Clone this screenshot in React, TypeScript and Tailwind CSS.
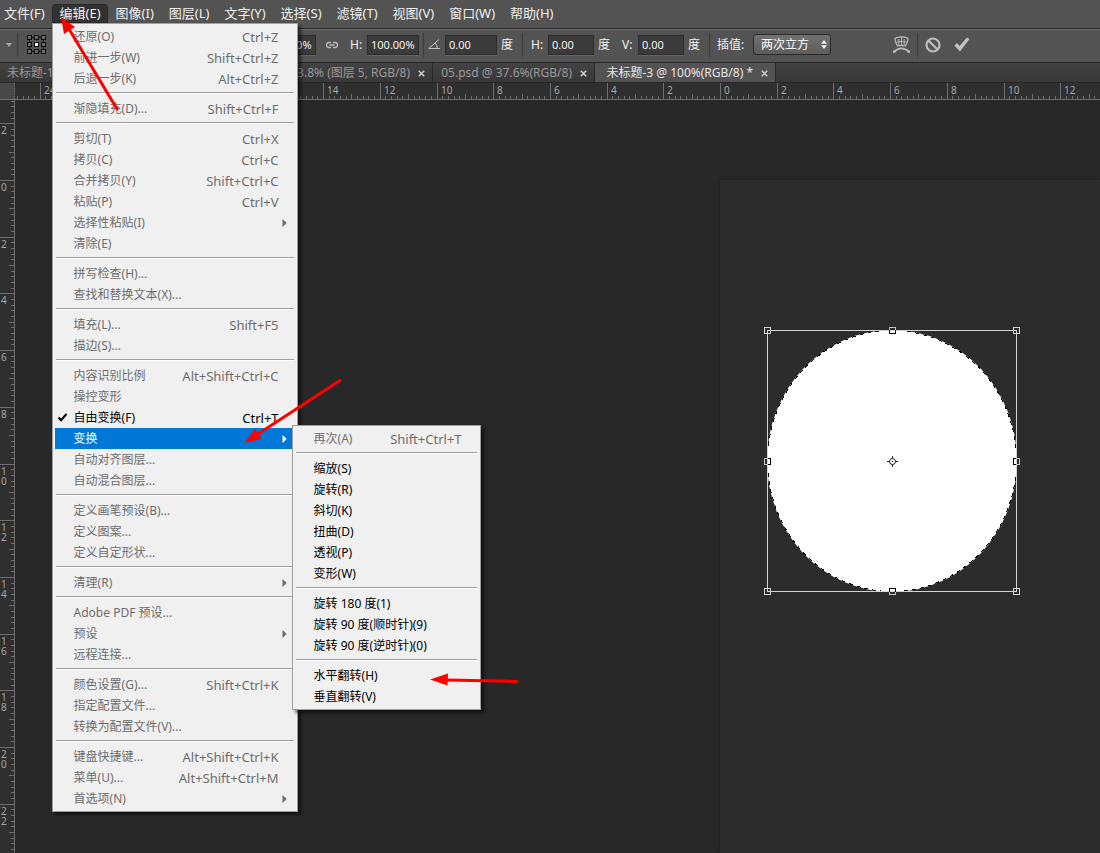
import React, { useEffect, useState } from "react";

const FONT = "font-['Noto_Sans','Noto_Sans_CJK_SC',sans-serif]";

type Entry =
  | "-"
  | {
      label: string;
      keys?: string;
      on?: boolean;
      checked?: boolean;
      more?: boolean;
      children?: Entry[];
    };

const TRANSFORM_MENU: Entry[] = [
  { label: "再次(A)", keys: "Shift+Ctrl+T" },
  "-",
  { label: "缩放(S)", on: true },
  { label: "旋转(R)", on: true },
  { label: "斜切(K)", on: true },
  { label: "扭曲(D)", on: true },
  { label: "透视(P)", on: true },
  { label: "变形(W)", on: true },
  "-",
  { label: "旋转 180 度(1)", on: true },
  { label: "旋转 90 度(顺时针)(9)", on: true },
  { label: "旋转 90 度(逆时针)(0)", on: true },
  "-",
  { label: "水平翻转(H)", on: true },
  { label: "垂直翻转(V)", on: true },
];

const EDIT_MENU: Entry[] = [
  { label: "还原(O)", keys: "Ctrl+Z" },
  { label: "前进一步(W)", keys: "Shift+Ctrl+Z" },
  { label: "后退一步(K)", keys: "Alt+Ctrl+Z" },
  "-",
  { label: "渐隐填充(D)...", keys: "Shift+Ctrl+F" },
  "-",
  { label: "剪切(T)", keys: "Ctrl+X" },
  { label: "拷贝(C)", keys: "Ctrl+C" },
  { label: "合并拷贝(Y)", keys: "Shift+Ctrl+C" },
  { label: "粘贴(P)", keys: "Ctrl+V" },
  { label: "选择性粘贴(I)", more: true },
  { label: "清除(E)" },
  "-",
  { label: "拼写检查(H)..." },
  { label: "查找和替换文本(X)..." },
  "-",
  { label: "填充(L)...", keys: "Shift+F5" },
  { label: "描边(S)..." },
  "-",
  { label: "内容识别比例", keys: "Alt+Shift+Ctrl+C" },
  { label: "操控变形" },
  { label: "自由变换(F)", keys: "Ctrl+T", on: true, checked: true },
  { label: "变换", on: true, more: true, children: TRANSFORM_MENU },
  { label: "自动对齐图层..." },
  { label: "自动混合图层..." },
  "-",
  { label: "定义画笔预设(B)..." },
  { label: "定义图案..." },
  { label: "定义自定形状..." },
  "-",
  { label: "清理(R)", more: true },
  "-",
  { label: "Adobe PDF 预设..." },
  { label: "预设", more: true },
  { label: "远程连接..." },
  "-",
  { label: "颜色设置(G)...", keys: "Shift+Ctrl+K" },
  { label: "指定配置文件..." },
  { label: "转换为配置文件(V)..." },
  "-",
  { label: "键盘快捷键...", keys: "Alt+Shift+Ctrl+K" },
  { label: "菜单(U)...", keys: "Alt+Shift+Ctrl+M" },
  { label: "首选项(N)", more: true },
];

function Menu({ entries, label }: { entries: Entry[]; label: string }) {
  return (
    <ul
      role="menu"
      aria-label={label}
      className="border border-[#a0a0a0] bg-[#f0f0f0] p-0.5 text-xs text-[#6d6d6d] shadow-[3px_3px_3px_rgba(0,0,0,0.55)]"
    >
      {entries.map((entry, i) => {
        if (entry === "-") {
          return (
            <li key={i} role="separator" className="h-[9px] px-px pt-[3px]">
              <div className="h-0.5 border-t border-[#a0a0a0] bg-white" />
            </li>
          );
        }
        const open = Boolean(entry.children);
        const tone = open ? "bg-[#0078d7] text-white" : entry.on ? "text-black" : "";
        return (
          <li key={i} role="none" className="relative">
            <button
              type="button"
              role="menuitem"
              disabled={!entry.on}
              className={`flex h-[21px] w-full items-center whitespace-nowrap text-left ${tone}`}
            >
              <span className="w-[19px] pl-[3px]">
                {entry.checked && (
                  <svg width="9" height="9" viewBox="0 0 9 9" fill="none" stroke="black" strokeWidth="2">
                    <path d="M0.5 4.5 L3 7.2 L8.5 1" />
                  </svg>
                )}
              </span>
              <span className="flex-1">{entry.label}</span>
              {entry.keys && <span className="pr-4 text-[13px] leading-4">{entry.keys}</span>}
              {entry.more && (
                <svg width="5" height="8" viewBox="0 0 5 8" fill="currentColor" className="mr-2">
                  <path d="M0.5 0 L4.7 4 L0.5 8 Z" />
                </svg>
              )}
            </button>
            {entry.children && (
              <div className="absolute -top-[3px] left-[237px] z-10 w-[189px]">
                <Menu entries={entry.children} label={entry.label} />
              </div>
            )}
          </li>
        );
      })}
    </ul>
  );
}

const MENUS = ["文件(F)", "编辑(E)", "图像(I)", "图层(L)", "文字(Y)", "选择(S)", "滤镜(T)", "视图(V)", "窗口(W)", "帮助(H)"];

function MenuBar() {
  return (
    <nav className="-ml-1 flex h-7 items-start pt-1 text-[13px] leading-[19px] text-[#f0f0f0]">
      {MENUS.map((name) =>
        name === "编辑(E)" ? (
          <div key={name} className="relative z-20">
            <button type="button" className="block h-[19px] rounded-t-sm bg-[#323232] pl-2 pr-[7px] ring-1 ring-inset ring-[#2a2a2a]">
              {name}
            </button>
            <div className="absolute left-0 top-full w-[246px]">
              <Menu entries={EDIT_MENU} label="编辑" />
            </div>
          </div>
        ) : (
          <button key={name} type="button" className="block h-[19px] pl-2 pr-[7px]">
            {name}
          </button>
        )
      )}
    </nav>
  );
}

function Field({ label, value, width }: { label: string; value: string; width: string }) {
  return (
    <input
      aria-label={label}
      defaultValue={value}
      className={`h-5 border border-[#2d2d2d] bg-[#3a3a3a] px-[3px] text-[11px] text-[#f2f2f2] shadow-[0_1px_0_#646464] outline-none ${width}`}
    />
  );
}

function Divider() {
  return <span className="h-6 w-px bg-[#3a3a3a]" />;
}

function ReferencePoint() {
  const cells = [0, 1, 2].flatMap((r) => [0, 1, 2].map((c) => [c, r]));
  return (
    <svg width="19" height="19" viewBox="0 0 19 19" shapeRendering="crispEdges">
      <rect x="2" y="2" width="15" height="15" fill="#0a0a0a" />
      <rect x="3" y="3" width="13" height="13" fill="#535353" />
      {cells.map(([c, r]) => (
        <g key={`${c}${r}`}>
          <rect x={c * 7} y={r * 7} width="5" height="5" fill="#0a0a0a" />
          <rect x={c * 7 + 1} y={r * 7 + 1} width="3" height="3" fill={c === 1 && r === 1 ? "#fff" : "#6b6b6b"} />
        </g>
      ))}
    </svg>
  );
}

function OptionsBar() {
  return (
    <div className="flex h-[34px] items-center border-t border-[#2b2b2b] bg-[#535353] pb-0.5 text-xs text-[#f0f0f0] shadow-[inset_0_1px_0_#686868]">
      <div className="flex w-[316px] shrink-0 items-center">
        <svg width="6" height="4" viewBox="0 0 6 4" className="ml-[6px] mr-[5px]">
          <path d="M0 0 H6 L3 4 Z" fill="#a8a8a8" />
        </svg>
        <Divider />
        <button type="button" aria-label="参考点位置" className="ml-[9px]">
          <ReferencePoint />
        </button>
        <span className="flex-1" />
        <Field label="W" value="100.00%" width="w-[52px]" />
      </div>
      <svg width="12" height="8" viewBox="0 0 12 8" fill="none" stroke="#bdbdbd" strokeWidth="1.3" className="ml-[10px]">
        <path d="M5 6.5 H3 A2.3 2.3 0 0 1 3 1.5 H5 M7 1.5 H9 A2.3 2.3 0 0 1 9 6.5 H7 M3.5 4 H8.5" />
      </svg>
      <span className="ml-3 w-[17px]">H:</span>
      <Field label="H" value="100.00%" width="w-[52px]" />
      <span className="w-1" />
      <Divider />
      <svg width="12" height="11" viewBox="0 0 12 11" fill="none" stroke="#c4c4c4" className="ml-[4px] mr-[5px]">
        <path d="M11 0.5 L0.8 9.5 H12 M7 4 Q9.5 6 9.3 9.5" />
      </svg>
      <Field label="角度" value="0.00" width="w-[52px]" />
      <span className="ml-1 w-[21px]">度</span>
      <Divider />
      <span className="ml-2 w-[17px]">H:</span>
      <Field label="水平斜切" value="0.00" width="w-[46px]" />
      <span className="ml-1 w-6">度</span>
      <span className="w-4">V:</span>
      <Field label="垂直斜切" value="0.00" width="w-[46px]" />
      <span className="ml-1 w-[21px]">度</span>
      <Divider />
      <label htmlFor="interpolation" className="ml-[7px] w-9">
        插值:
      </label>
      <div className="relative">
        <select
          id="interpolation"
          className="block h-[21px] w-[78px] appearance-none rounded-[3px] border border-[#2a2a2a] bg-linear-to-b from-[#727272] to-[#5c5c5c] pl-[7px] text-xs text-white"
        >
          <option>两次立方</option>
        </select>
        <svg width="6" height="9" viewBox="0 0 6 9" fill="#eee" className="pointer-events-none absolute right-1 top-[6px]">
          <path d="M3 0 L6 3.7 H0 Z M3 9 L6 5.3 H0 Z" />
        </svg>
      </div>
      <button type="button" aria-label="变形模式" className="ml-[62px] mr-[7px]">
        <svg width="17" height="17" viewBox="0 0 17 17" fill="none" stroke="#bebebe">
          <path d="M2 3 Q2.500 0.800 8.500 0.800 Q14.500 0.800 15 3 Q14.500 7 12.500 10 Q8.500 8.800 4.500 10 Q2.500 7 2 3 Z" strokeWidth="1.2" />
          <path d="M3.200 6.200 Q8.500 4.500 13.800 6.200 M8.500 0.800 V9.400 M5.800 3 V9 M11.200 3 V9" strokeWidth="0.9" />
          <path d="M1 15.800 Q8.500 8.800 16 15.800" strokeWidth="1.6" />
          <path d="M0 14.500 h2.500 v2.200 h-2.500 Z M14.500 14.500 h2.500 v2.200 h-2.500 Z" fill="#bebebe" stroke="none" />
        </svg>
      </button>
      <Divider />
      <button type="button" aria-label="取消变换" className="ml-[7px]">
        <svg width="16" height="16" viewBox="0 0 16 16" fill="none" stroke="#bebebe" strokeWidth="2.2">
          <circle cx="8" cy="8" r="6.5" />
          <path d="M3.5 3.5 L12.5 12.5" />
        </svg>
      </button>
      <button type="button" aria-label="提交变换" className="ml-[13px]">
        <svg width="16" height="15" viewBox="0 0 16 15">
          <path d="M0.5 8.5 L3 6 L5.5 9 L13 0.5 L15.5 2 L6 14.5 Z" fill="#c2c2c2" />
        </svg>
      </button>
    </div>
  );
}

function Close() {
  return (
    <svg width="7" height="7" viewBox="0 0 7 7" stroke="currentColor" strokeWidth="1.5">
      <path d="M0.8 0.8 L6.2 6.2 M6.2 0.8 L0.8 6.2" />
    </svg>
  );
}

function Tab({ title, width, active }: { title: string; width: string; active?: boolean }) {
  return (
    <div
      className={`flex h-full shrink-0 items-center justify-end gap-2 whitespace-nowrap border-r border-[#282828] pr-[7px] pt-px ${width} ${
        active ? "bg-[#535353] text-[#e6e6e6]" : "text-[#999]"
      }`}
    >
      <button type="button">{title}</button>
      <button type="button" aria-label="关闭" className="text-[#cfcfcf]">
        <Close />
      </button>
    </div>
  );
}

function Tabs() {
  return (
    <div className="flex h-[21px] border-y border-[#282828] bg-linear-to-b from-[#424242] to-[#383838] text-xs leading-[18px]">
      <Tab title="未标题-1 @ 66.7%(RGB/8)" width="w-[170px]" />
      <Tab title="未标题-2 @ 33.8% (图层 5, RGB/8)" width="w-[263px]" />
      <Tab title="05.psd @ 37.6%(RGB/8)" width="w-[162px]" />
      <Tab title="未标题-3 @ 100%(RGB/8) *" width="w-[181px]" active />
    </div>
  );
}

const STEP = 56.7;

function useWindowSize() {
  const [size, setSize] = useState({ width: window.innerWidth, height: window.innerHeight });
  useEffect(() => {
    const update = () => setSize({ width: window.innerWidth, height: window.innerHeight });
    window.addEventListener("resize", update);
    return () => window.removeEventListener("resize", update);
  }, []);
  return size;
}

function range(from: number, to: number) {
  return Array.from({ length: Math.max(0, to - from + 1) }, (_, i) => from + i);
}

function tickPath(origin: number, from: number, to: number, line: (at: number, kind: number) => string) {
  return range(from, to)
    .map((i) => line(Math.floor(origin + (i * STEP) / 10) + 0.5, i % 10 === 0 ? 2 : i % 5 === 0 ? 1 : 0))
    .join("");
}

function HorizontalRuler() {
  const { width } = useWindowSize();
  const last = Math.floor((width - 740) / STEP);
  return (
    <svg className="h-[17px] min-w-0 flex-1" shapeRendering="crispEdges">
      <path
        d={tickPath(705.5, -124, last * 10 + 12, (x, k) => `M${x} ${[13, 11, 0][k]} V17 `)}
        stroke="#6e6e6e"
        fill="none"
      />
      {range(-12, last).map((n) => (
        <text key={n} x={Math.floor(705.5 + n * STEP) + 4} y="11" fontSize="10" fill="#a6a6a6">
          {Math.abs(n * 2)}
        </text>
      ))}
    </svg>
  );
}

function VerticalRuler() {
  const { height } = useWindowSize();
  const last = Math.floor((height - 204) / STEP);
  return (
    <div className="relative w-[15px] shrink-0 overflow-hidden border-r border-[#6e6e6e] bg-[#2f2f2f]">
      <svg className="absolute inset-0 h-full w-full" shapeRendering="crispEdges">
        <path
          d={tickPath(80.5, -14, last * 10 + 12, (y, k) => `M${[11, 9, 0][k]} ${y} H14 `)}
          stroke="#6e6e6e"
          fill="none"
        />
        {range(-1, last).flatMap((n) =>
          String(Math.abs(n * 2))
            .split("")
            .map((digit, i) => (
              <text key={`${n}-${i}`} x="1" y={Math.floor(80.5 + n * STEP) + 11 + i * 10} fontSize="10" fill="#a6a6a6">
                {digit}
              </text>
            ))
        )}
      </svg>
    </div>
  );
}

const HANDLES = [
  [0, 0], [125, 0], [249, 0],
  [0, 131], [249, 131],
  [0, 261], [125, 261], [249, 261],
];

function Artwork() {
  return (
    <svg width="257" height="269" viewBox="-4 -4 257 269" className="absolute left-[43px] top-[146px]">
      <ellipse cx="125" cy="131" rx="125" ry="131" fill="#fff" />
      <ellipse cx="125" cy="131" rx="124.5" ry="130.5" fill="none" stroke="#000" strokeDasharray="4 4" shapeRendering="crispEdges" />
      <g shapeRendering="crispEdges" fill="none">
        <rect x="0.5" y="0.5" width="249" height="261" stroke="#d4d4d4" />
        {HANDLES.map(([x, y]) => {
          const corner = x !== 125 && y !== 131;
          return (
            <g key={`${x}-${y}`}>
              <rect x={x - 2.5} y={y - 2.5} width="6" height="6" stroke={corner ? "#d4d4d4" : "#c8c8c8"} />
              {x === 125 && <path d={y === 0 ? "M122.5 0 V3.5 H128.5 V0" : "M122.5 262 V258.5 H128.5 V262"} stroke="#000" />}
              {y === 131 && <path d={x === 0 ? "M1 128.5 H3.5 V134.5 H1" : "M249 128.5 H246.5 V134.5 H249"} stroke="#000" />}
            </g>
          );
        })}
      </g>
      <g stroke="#222" fill="none">
        <circle cx="125.5" cy="131.5" r="3" />
        <path d="M120 131.5 H123 M128 131.5 H131 M125.5 126 V129 M125.5 134 V137 M125 131.5 H126" />
      </g>
    </svg>
  );
}

function Workspace() {
  return (
    <div className="flex flex-1 flex-col">
      <div className="flex h-[17px] border-b border-[#6e6e6e] bg-[#2f2f2f]">
        <div className="w-[15px] shrink-0 border-r border-dotted border-[#6e6e6e] bg-[#484848]" />
        <HorizontalRuler />
      </div>
      <div className="flex flex-1">
        <VerticalRuler />
        <main className="relative flex-1 overflow-hidden bg-[#282828]">
          <div className="absolute bottom-0 left-[705px] right-0 top-[80px] bg-[#2c2c2c] shadow-[0_0_4px_rgba(0,0,0,0.4)]">
            <Artwork />
          </div>
        </main>
      </div>
    </div>
  );
}

function Annotations() {
  return (
    <svg className="pointer-events-none absolute inset-0 z-30 h-full w-full" fill="#f00" stroke="#f00" strokeLinecap="round">
      <path d="M117 109 L69 29" strokeWidth="3" />
      <path d="M61 17 L75 27 L64 34 Z" stroke="none" />
      <path d="M340 380.5 L258 434" strokeWidth="3" />
      <path d="M244.5 443 L255 429 L262 439 Z" stroke="none" />
      <path d="M517 681.5 L446 680" strokeWidth="3" />
      <path d="M430 679.5 L448 673.5 L447.5 685.5 Z" stroke="none" />
    </svg>
  );
}

export default function App() {
  return (
    <div className={`relative flex min-h-screen flex-col overflow-hidden bg-[#535353] ${FONT}`}>
      <MenuBar />
      <OptionsBar />
      <Tabs />
      <Workspace />
      <Annotations />
    </div>
  );
}
